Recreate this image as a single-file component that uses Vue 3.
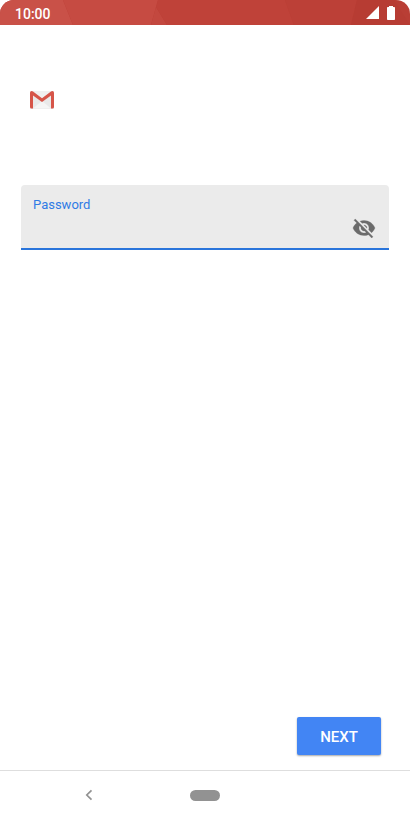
<script setup>
import { ref } from 'vue'

const password = ref('')
const visible = ref(false)
</script>

<template>
  <div class="screen">
    <header class="status">
      <svg class="facets" viewBox="0 0 410 25" preserveAspectRatio="none" aria-hidden="true">
        <path d="M0 0H63L73 25H0Z" fill="#c95148" />
        <path d="M63 0H158L151 25H73Z" fill="#c64b42" />
        <path d="M158 0 151 25H167L156 7Z" fill="#c3483f" />
        <path d="M158 0H285L294 25H167L156 7Z" fill="#bf4239" />
        <path d="M285 0H357L351 25H294Z" fill="#bc4037" />
        <path d="M357 0H394L410 25H351Z" fill="#b73c33" />
      </svg>
      <span class="clock">10:00</span>
      <span class="indicators">
        <svg width="13" height="13" viewBox="0 0 13 13" aria-hidden="true">
          <path d="M13 0V13H0Z" fill="#fff" />
        </svg>
        <svg width="8" height="14" viewBox="0 0 8 14" aria-hidden="true">
          <path d="M2 0h4v1H7.200q.8 0 .8.8v11.400q0 .8-.8.8H.8Q0 14 0 13.200V1.800Q0 1 .8 1H2Z" fill="#fff" />
        </svg>
      </span>
    </header>

    <form class="content" @submit.prevent>
      <svg class="logo" width="24" height="18" viewBox="0 0 24 18" role="img" aria-label="Gmail">
        <rect width="24" height="18" rx="1.500" fill="#e9e9e9" />
        <path d="M3 17.500 12 10l9 7.500Z" fill="#f5f5f5" />
        <path d="M2 0h20l-10 8.500Z" fill="#f0f0f0" />
        <path d="M0 1.700Q0 0 1.700 0q.7 0 1.300.5L12 7.300l9-6.800Q21.600 0 22.300 0 24 0 24 1.700v14.300q0 1.500-1.500 1.500H21V4.400l-9 6.700-9-6.700V17.500H1.500Q0 17.500 0 16Z" fill="#d65549" />
      </svg>

      <div class="field">
        <label for="password">Password</label>
        <div class="entry">
          <input id="password" v-model="password" :type="visible ? 'text' : 'password'" autocomplete="current-password" />
          <button class="toggle" type="button" aria-label="Show password" :aria-pressed="visible" @click="visible = !visible">
            <svg width="24" height="24" viewBox="0 0 24 24" aria-hidden="true">
              <path fill="#6b6b6b" stroke="#6b6b6b" stroke-width=".3" d="M12 7c2.760 0 5 2.240 5 5 0 .65-.13 1.260-.36 1.830l2.920 2.920c1.510-1.260 2.700-2.890 3.430-4.750-1.730-4.390-6-7.500-11-7.500-1.400 0-2.740.25-3.980.7l2.160 2.160C10.740 7.130 11.350 7 12 7zM2 4.270l2.280 2.280.46.46C3.080 8.300 1.780 10.020 1 12c1.730 4.390 6 7.500 11 7.500 1.550 0 3.030-.3 4.380-.84l.42.42L19.730 22 21 20.730 3.270 3 2 4.270zM7.530 9.800l1.550 1.550c-.05.21-.08.43-.08.65 0 1.660 1.340 3 3 3 .22 0 .44-.03.65-.08l1.550 1.550c-.67.33-1.410.53-2.200.53-2.760 0-5-2.240-5-5 0-.79.2-1.530.53-2.200zm4.310-.78l3.150 3.150.02-.16c0-1.660-1.340-3-3-3l-.17.01z" />
            </svg>
          </button>
        </div>
      </div>

      <button class="next" type="submit">NEXT</button>
    </form>

    <nav class="system">
      <button class="back" type="button" aria-label="Back">
        <svg width="8" height="12" viewBox="0 0 8 12" aria-hidden="true">
          <path d="M6.500 1.300 1.800 6l4.700 4.700" fill="none" stroke="#929292" stroke-width="1.700" />
        </svg>
      </button>
      <button class="home" type="button" aria-label="Home"></button>
    </nav>
  </div>
</template>

<style>
body {
  margin: 0;
  background: #fff;
}
</style>

<style scoped>
.screen {
  display: flex;
  flex-direction: column;
  min-height: 100vh;
  background: #fff;
  font-family: Roboto, "Liberation Sans", sans-serif;
}

button {
  padding: 0;
  border: 0;
  background: none;
  font-family: inherit;
  cursor: pointer;
}

svg {
  display: block;
}

.status {
  position: relative;
  display: flex;
  align-items: center;
  justify-content: space-between;
  box-sizing: border-box;
  height: 25px;
  padding: 0 15px;
  overflow: hidden;
  border-radius: 14px 14px 0 0;
  background: #b93e35;
  color: #fff;
}

.facets {
  position: absolute;
  inset: 0;
  width: 100%;
  height: 100%;
}

.clock {
  position: relative;
  padding-top: 2px;
  font-size: 14px;
  font-weight: 500;
  line-height: 24px;
}

.indicators {
  position: relative;
  display: flex;
  align-items: center;
  gap: 8px;
}

.content {
  display: flex;
  flex: 1;
  flex-direction: column;
  padding: 66px 21px 15px;
}

.logo {
  margin: 0 9px 76px;
}

.field {
  box-sizing: border-box;
  padding: 12px 13px 8px 12px;
  border-bottom: 2px solid #2a75db;
  border-radius: 4px 4px 0 0;
  background: #ebebeb;
}

.field label {
  display: block;
  color: #2f7be5;
  font-size: 13px;
  line-height: 16px;
}

.entry {
  display: flex;
  align-items: center;
  gap: 12px;
  margin-top: 3px;
}

.entry input {
  flex: 1;
  min-width: 0;
  height: 24px;
  padding: 0;
  border: 0;
  outline: 0;
  background: transparent;
  color: #212121;
  font-family: inherit;
  font-size: 16px;
}

.next {
  align-self: flex-end;
  min-width: 84px;
  height: 38px;
  margin: auto 8px 0 0;
  padding-top: 2px;
  border-radius: 2px;
  background: #4285f4;
  box-shadow: 0 1px 2px rgba(0, 0, 0, 0.35);
  color: #fff;
  font-size: 15px;
  font-weight: 500;
}

.system {
  display: grid;
  grid-template-columns: 1fr auto 1fr;
  align-items: center;
  box-sizing: border-box;
  height: 50px;
  padding-bottom: 1px;
  border-top: 1px solid #dedede;
}

.back {
  justify-self: center;
  padding: 12px;
  margin-left: -12px;
}

.home {
  width: 30px;
  height: 11px;
  border-radius: 6px;
  background: #929292;
}
</style>
